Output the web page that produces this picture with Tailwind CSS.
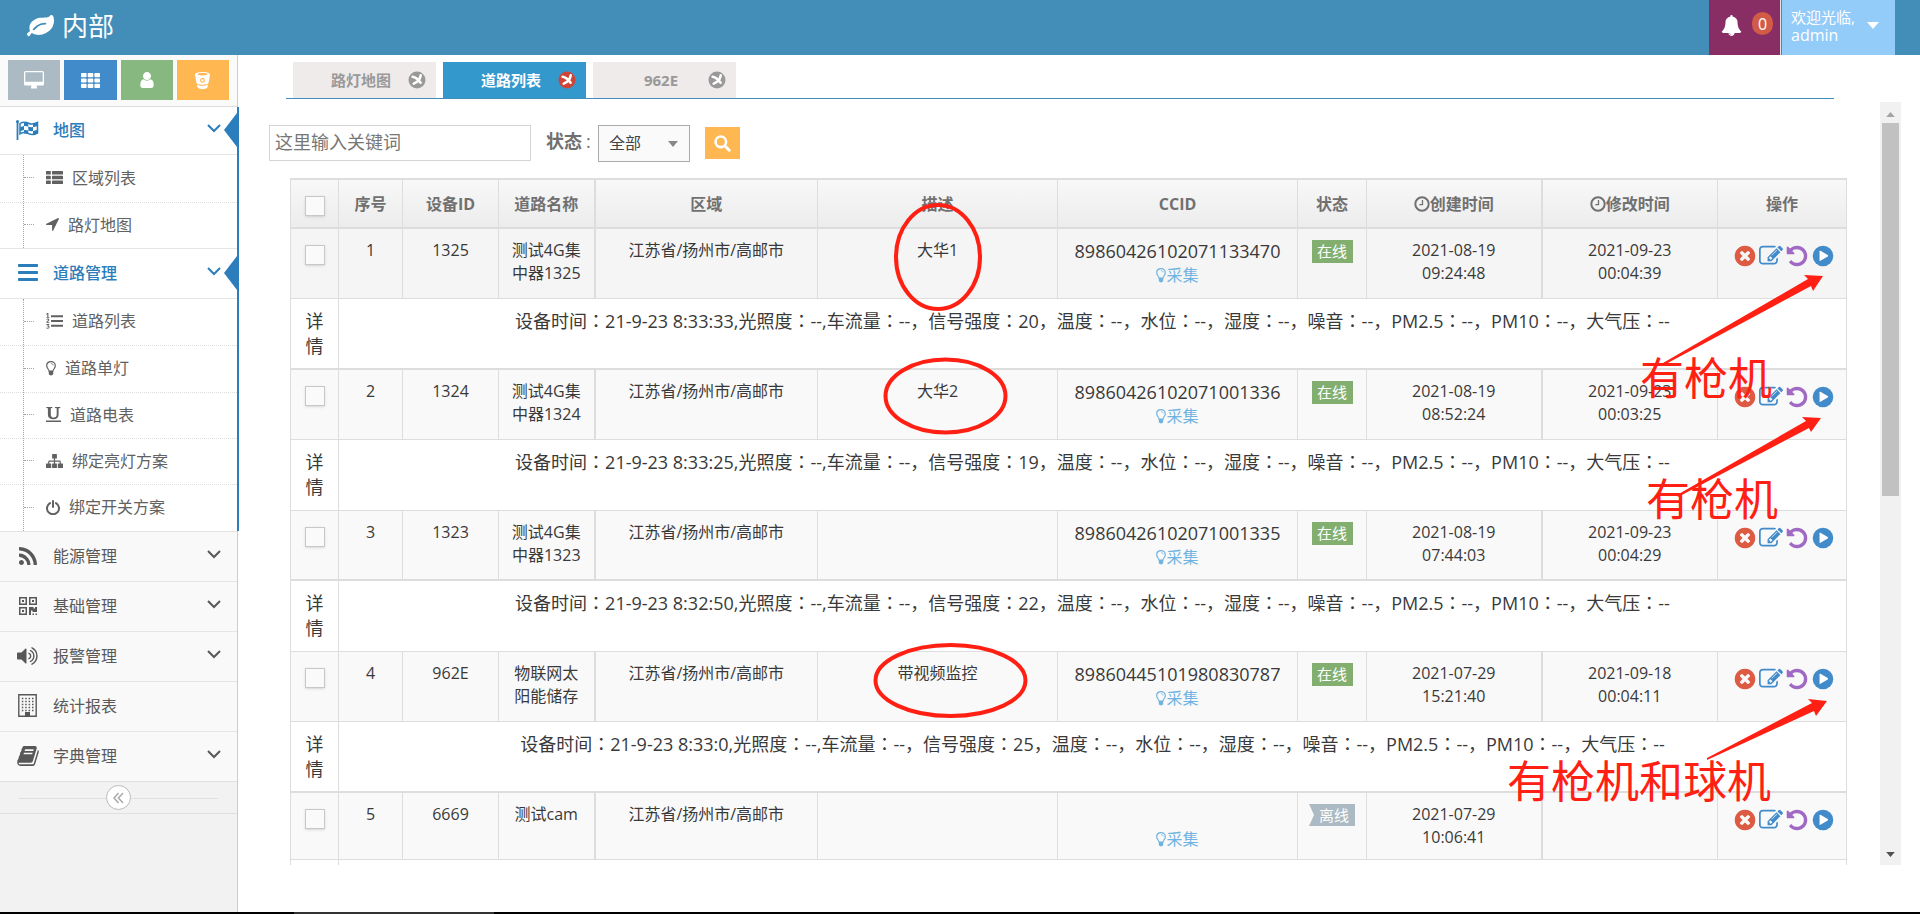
<!DOCTYPE html>
<html lang="zh-CN">
<head>
<meta charset="utf-8">
<title>内部 - 道路列表</title>
<script src="https://cdn.jsdelivr.net/npm/@tailwindcss/browser@4"></script>
</head>
<body class="relative flex h-screen flex-col overflow-hidden bg-white font-['Open_Sans','Noto_Sans_CJK_SC',sans-serif] text-base text-[#393939]">

<svg class="hidden" aria-hidden="true">
  <symbol id="leaf" viewBox="0 0 1792 1792"><path d="M1280 704q0-26-19-45t-45-19q-172 0-318 49.5t-259.5 134-235.5 219.5q-19 21-19 45 0 26 19 45t45 19q24 0 45-19 27-24 74-71t67-66q137-124 268.5-176t313.5-52q26 0 45-19t19-45zm512-198q0 95-20 193-46 224-184.5 383t-357.5 268q-214 108-438 108-148 0-286-47-15-5-88-42t-96-37q-16 0-39.5 32t-45 70-52.5 70-60 32q-43 0-63.5-17.5t-45.5-59.5q-2-4-6-11t-5.5-10-3-9.5-1.5-13.5q0-35 31-73.5t68-65.5 68-56 31-48q0-4-14-38t-16-44q-9-51-9-104 0-115 43.5-220t119-184.5 170.5-139 204-95.5q55-18 145-25.5t179.5-9 178.5-6 163.5-24 113.5-56.5l29.5-29.5 29.5-28 27-20 36.5-16 43.5-4.5q39 0 70.5 46t47.5 112 24 124 8 96z"/></symbol>
  <symbol id="bell" viewBox="0 0 1792 1792"><path d="M912 1696q0-16-16-16-59 0-101.5-42.5t-42.5-101.5q0-16-16-16t-16 16q0 73 51.5 124.5t124.5 51.5q16 0 16-16zm816-288q0 52-38 90t-90 38h-448q0 106-75 181t-181 75-181-75-75-181h-448q-52 0-90-38t-38-90q50-42 91-88t85-119.5 74.5-158.5 50-206 19.5-260q0-152 117-282.5t307-158.5q-8-19-8-39 0-40 28-68t68-28 68 28 28 68q0 20-8 39 190 28 307 158.5t117 282.5q0 139 19.5 260t50 206 74.5 158.5 85 119.5 91 88z"/></symbol>
  <symbol id="desktop" viewBox="0 0 20 18"><path fill-rule="evenodd" d="M1.5 0h17A1.500 1.500 0 0 1 20 1.500v11.500a1.500 1.500 0 0 1-1.500 1.500H12.500l.5 2a.7.7 0 0 1-.7 1H7.700a.7.7 0 0 1-.7-1l.5-2H1.500A1.500 1.500 0 0 1 0 13V1.500A1.500 1.500 0 0 1 1.500 0zM1.300 1.700v9h17.400v-9a.4.4 0 0 0-.4-.4H1.700a.4.4 0 0 0-.4.4z"/></symbol>
  <symbol id="th" viewBox="0 0 19 15"><path d="M0 .8Q0 0 .8 0h4Q5.600 0 5.600.8v2.600q0 .8-.8.8h-4Q0 4.200 0 3.400zM6.700.8q0-.8.8-.8h4q.8 0 .8.8v2.600q0 .8-.8.8h-4q-.8 0-.8-.8zM13.400.8q0-.8.8-.8h4q.8 0 .8.8v2.600q0 .8-.8.8h-4q-.8 0-.8-.8zM0 6.200q0-.8.8-.8h4q.8 0 .8.8v2.600q0 .8-.8.8h-4Q0 9.600 0 8.800zM6.700 6.200q0-.8.8-.8h4q.8 0 .8.8v2.600q0 .8-.8.8h-4q-.8 0-.8-.8zM13.400 6.200q0-.8.8-.8h4q.8 0 .8.8v2.600q0 .8-.8.8h-4q-.8 0-.8-.8zM0 11.600q0-.8.8-.8h4q.8 0 .8.8v2.600q0 .8-.8.8h-4q-.8 0-.8-.8zM6.700 11.600q0-.8.8-.8h4q.8 0 .8.8v2.600q0 .8-.8.8h-4q-.8 0-.8-.8zM13.400 11.600q0-.8.8-.8h4q.8 0 .8.8v2.600q0 .8-.8.8h-4q-.8 0-.8-.8z"/></symbol>
  <symbol id="user" viewBox="128 128 1536 1536"><path d="M1536 1399q0 109-62.500 187t-150.500 78h-854q-88 0-150.500-78t-62.500-187q0-85 8.500-160.500t31.500-152 58.500-131 94-89 134.500-34.500q131 128 313 128t313-128q76 0 134.500 34.500t94 89 58.500 131 31.500 152 8.500 160.500zm-256-887q0 159-112.500 271.500t-271.500 112.500-271.500-112.500-112.500-271.500 112.500-271.500 271.500-112.500 271.500 112.500 112.500 271.500z"/></symbol>
  <symbol id="bucket" viewBox="0 0 15 17"><path fill-rule="evenodd" d="M7.500 0C11.500 0 15 .9 15 2.600l-1.400 8.100c-.2 1-2.800 2-6.100 2s-5.900-1-6.100-2L0 2.600C0 .9 3.500 0 7.500 0zm0 1.100c-3 0-5 .5-5 1.200s2 1.200 5 1.200 5-.5 5-1.200-2-1.200-5-1.200zm0 4.900a2.400 2.400 0 1 0 0 4.800 2.400 2.400 0 0 0 0-4.800zm0 1.200a1.200 1.200 0 1 1 0 2.400 1.200 1.200 0 0 1 0-2.400zM2 12.500c1.500.9 3.300 1.300 5.500 1.300s4-.4 5.500-1.300l-.5 2.700c-.3 1-2.300 1.800-5 1.800s-4.700-.8-5-1.800z"/></symbol>
  <symbol id="flag" viewBox="0 0 23 20"><g fill="none" stroke="currentColor" stroke-width="1.500"><path d="M1.500 1v19" stroke-width="1.800"/><path d="M4 3.500c3-2 6-1.500 8.500-.3s5.500 1 9-.7v10.500c-3.500 1.800-6.500 1.800-9 .6s-5.500-1.500-8.500.3z"/></g><circle cx="1.500" cy="1.500" r="1.500"/><path d="M8 2q2.300-.4 4.300.8v3.700Q10.300 5.600 8 6zM4 7.500Q6 6 8 6v4q-2 .2-4 1.500zM12.300 6.500q2.200 1 4.700.6v4q-2.500.4-4.700-.6zM17 3.500q2-.3 4.500-1.500v4Q19 7 17 7.100zM8 10q2.300-.4 4.300.5v3.600Q10 13.200 8 13.500zM17 11q2-.5 4.500-1.500v4q-2.500 1-4.500 1.200z"/></symbol>
  <symbol id="bars" viewBox="0 0 20 17"><path d="M0 .8Q0 0 .8 0h18.400q.8 0 .8.800v1.400q0 .8-.8.8H.8Q0 3 0 2.200zM0 7.800Q0 7 .8 7h18.400q.8 0 .8.800v1.400q0 .8-.8.8H.8Q0 10 0 9.200zM0 14.800q0-.8.8-.8h18.400q.8 0 .8.800v1.400q0 .8-.8.8H.8q-.8 0-.8-.8z"/></symbol>
  <symbol id="thlist" viewBox="0 0 17 13"><path d="M0 .5Q0 0 .5 0h3.800q.5 0 .5.500v2.500q0 .5-.5.5H.5Q0 3.500 0 3zM6 .5q0-.5.500-.5h10q.5 0 .5.500v2.500q0 .5-.5.5h-10Q6 3.500 6 3zM0 5.200q0-.5.500-.5h3.800q.5 0 .5.500v2.500q0 .5-.5.500H.5Q0 8.200 0 7.700zM6 5.200q0-.5.500-.5h10q.5 0 .5.500v2.500q0 .5-.5.500h-10Q6 8.200 6 7.700zM0 10q0-.5.500-.5h3.800q.5 0 .5.500v2.500q0 .5-.5.500H.5Q0 13 0 12.500zM6 10q0-.5.500-.5h10q.5 0 .5.500v2.500q0 .5-.5.500h-10Q6 13 6 12.500z"/></symbol>
  <symbol id="location" viewBox="0 0 13 13"><path d="M12.900.9 7.200 12.600c-.2.500-1.100.4-1.100-.2V6.900H.6c-.6 0-.8-.8-.2-1.100L12.100.1c.5-.2 1 .3.800.8z"/></symbol>
  <symbol id="listol" viewBox="0 0 17 16"><path d="M5 2.200h12v2H5zM5 7h12v2H5zM5 11.800h12v2H5zM1.200 0h1.200v4h1v.8H.4V4h.9V1.300l-.8.5-.3-.8zM.3 6.200C1 5.300 3.300 5.400 3.300 6.800c0 .9-1 1.500-1.600 2.100h1.700v.9H.3c-.2-1.700 1.900-2.100 1.900-2.900 0-.7-.9-.6-1.300-.1zM.4 11h2.900v.7l-1 1.100c2 .3 1.500 2.900-.5 2.900-.8 0-1.300-.2-1.600-.5l.4-.8c.7.600 2 .6 2-.2 0-.6-.7-.7-1.300-.6l-.2-.5 1-1.200H.4z"/></symbol>
  <symbol id="bulb" viewBox="0 0 10 15"><path fill="none" stroke="currentColor" stroke-width="1.200" d="M3.100 10.200C3 8.400.7 7.300.7 4.700.7 2.300 2.600.7 5 .7s4.300 1.600 4.300 4c0 2.600-2.300 3.700-2.400 5.500z"/><path d="M2.800 10h4.400v2.900q0 .8-.9.900Q5.900 14.600 5 14.600t-1.300-.8q-.9-.1-.9-.9z"/><path fill="none" stroke="currentColor" stroke-width=".8" d="M5 2.600c1.200 0 2.100.7 2.200 1.800"/></symbol>
  <symbol id="underline" viewBox="0 0 15 15"><path d="M.3 0h6v1L4.800 1.300v6.200c0 2 .9 3.100 2.900 3.100s3-1.200 3-3.300v-6L9 1V0h5.300v1l-1.700.3v6.100c0 3-1.700 4.800-5.200 4.800S1.900 10.500 1.900 7.700V1.300L.3 1zM0 13.600h15V15H0z"/></symbol>
  <symbol id="sitemap" viewBox="0 0 17 14"><path d="M6.100.5q0-.5.500-.5h3.800q.5 0 .5.500v3.600q0 .5-.5.500H9.100v1.900h4.400q1.300 0 1.300 1.300v1.600h1.700q.5 0 .5.500v3.600q0 .5-.5.500h-4.200q-.5 0-.5-.5V9.900q0-.5.500-.5h1.300V7.700H9.100v1.700h1.300q.5 0 .5.500v3.600q0 .5-.5.500H6.600q-.5 0-.5-.5V9.900q0-.5.500-.5h1.300V7.700H3.400v1.700h1.300q.5 0 .5.500v3.600q0 .5-.5.500H.5q-.5 0-.5-.5V9.900q0-.5.500-.5h1.700V7.800q0-1.300 1.300-1.300h4.400V4.600H6.600q-.5 0-.5-.5z"/></symbol>
  <symbol id="power" viewBox="0 0 14 15"><g fill="none" stroke="currentColor" stroke-width="2" stroke-linecap="round"><path d="M4 3.100a6 6 0 1 0 6 0"/><path d="M7 1v6"/></g></symbol>
  <symbol id="rss" viewBox="192 128 1408 1408"><path d="M576 1344q0 80-56 136t-136 56-136-56-56-136 56-136 136-56 136 56 56 136zm512 123q2 28-17 48-18 21-47 21h-135q-25 0-43-16.500t-20-41.500q-22-229-184.500-391.500t-391.500-184.500q-25-2-41.500-20t-16.500-43v-135q0-29 21-47 17-17 43-17h5q160 13 306 80.500t259 181.500q114 113 181.500 259t80.500 306zm512 2q2 27-18 47-18 20-46 20h-143q-26 0-44.500-17.500t-19.500-42.500q-12-215-101-408.500t-231.500-336-336-231.500-408.500-102q-25-1-42.500-19.500t-17.500-43.500v-143q0-28 20-46 18-18 44-18h3q262 13 501.500 120t425.500 294q187 186 294 425.500t120 501.500z"/></symbol>
  <symbol id="qrcode" viewBox="0 0 18 18"><path fill-rule="evenodd" d="M0 0h8v8H0zm1.500 1.500v5h5v-5zM3 3h2v2H3zM10 0h8v8h-8zm1.500 1.500v5h5v-5zM13 3h2v2h-2zM0 10h8v8H0zm1.500 1.500v5h5v-5zM3 13h2v2H3zM10 10h4.500v1.500H16V10h2v5h-4.500v-1.500H12V18h-2zM13.500 16.500h1.500V18h-1.500zM16.500 16.500H18V18h-1.500z"/></symbol>
  <symbol id="volume" viewBox="0 0 22 18"><path d="M9.500 2v14c0 .6-.6.8-1 .4L4.500 12.500H.7c-.4 0-.7-.3-.7-.7V6.200c0-.4.300-.7.700-.7h3.800l4-3.900c.4-.4 1-.2 1 .4z"/><g fill="none" stroke="currentColor" stroke-width="1.400" stroke-linecap="round"><path d="M12 6.300a3 3 0 0 1 0 5.400M13.500 3.500a6.200 6.200 0 0 1 0 11M15 .8a9.300 9.300 0 0 1 0 16.400"/></g></symbol>
  <symbol id="building" viewBox="0 0 19 23"><path fill="none" stroke="currentColor" stroke-width="1.400" d="M.8.800h17.400v21.400H.8z"/><path d="M7 18h5v4H7z"/><path fill="none" stroke="currentColor" stroke-width="1.400" stroke-dasharray="1.500 1.900" d="M3.800 4.500h12M3.800 7.500h12M3.800 10.500h12M3.800 13.500h12M3.800 16.500h12"/></symbol>
  <symbol id="book" viewBox="60 128 1672 1536"><path d="M1703 478q40 57 18 129l-275 906q-19 64-76.500 107.500t-122.500 43.500h-923q-77 0-148.500-53.500t-99.500-131.500q-24-67-2-127 0-4 3-27t4-37q1-8-3-21.500t-3-19.500q2-11 8-21t16.500-23.500 16.500-23.500q23-38 45-91.500t30-91.500q3-10 .5-30t-.5-28q3-11 17-28t17-23q21-36 42-92t25-90q1-9-2.500-32t.5-28q4-13 22-30.500t22-22.500q19-26 42.500-84.500t27.500-96.500q1-8-3-25.500t-2-26.500q2-8 9-18t18-23 17-21q8-12 16.500-30.500t15-35 16-36 19.500-32 26.500-23.500 36-11.500 47.500 5.500l-1 3q38-9 51-9h761q74 0 114 56t18 130l-274 906q-36 119-71.500 153.500t-128.500 34.500h-869q-27 0-38 15-11 16-1 43 24 70 144 70h923q29 0 56-15.500t35-41.500l300-987q7-22 5-57 38 15 59 43zm-1064 2q-4 13 2 22.500t20 9.500h608q13 0 25.500-9.500t16.500-22.500l21-64q4-13-2-22.500t-20-9.500h-608q-13 0-25.500 9.500t-16.500 22.500zm-83 256q-4 13 2 22.500t20 9.500h608q13 0 25.500-9.500t16.500-22.500l21-64q4-13-2-22.500t-20-9.500h-608q-13 0-25.500 9.500t-16.500 22.500z"/></symbol>
  <symbol id="angle" viewBox="0 0 14 9"><path fill="none" stroke="currentColor" stroke-width="2" d="m1 1 6 6 6-6"/></symbol>
  <symbol id="dleft" viewBox="0 0 11 12"><path fill="none" stroke="currentColor" stroke-width="1.500" d="M5.500 1 1 6l4.500 5M10 1 5.500 6l4.500 5"/></symbol>
  <symbol id="tabclose" viewBox="0 0 18 18"><circle cx="9" cy="9" r="8.500"/><path fill="none" stroke="#fff" stroke-width="2.600" stroke-linecap="round" d="M4.600 5.800c2.600.4 5.700 2.700 8 5.900M12.700 4.400c-.7 3.600-3.200 6.800-7 8.200"/></symbol>
  <symbol id="search" viewBox="0 0 17 17"><circle cx="6.800" cy="6.800" r="5.300" fill="none" stroke="currentColor" stroke-width="2.600"/><path stroke="currentColor" stroke-width="3" stroke-linecap="round" d="m11.200 11.200 4 4"/></symbol>
  <symbol id="caret" viewBox="0 0 12 7"><path d="M0 0h12L6 7z"/></symbol>
  <symbol id="clock" viewBox="0 0 16 16"><circle cx="8" cy="8" r="6.700" fill="none" stroke="currentColor" stroke-width="2"/><path fill="none" stroke="currentColor" stroke-width="1.300" d="M8.500 4v4.600H5.300"/></symbol>
  <symbol id="remove" viewBox="0 0 1792 1792"><path d="M1277 1122q0-26-19-45l-181-181 181-181q19-19 19-45 0-27-19-46l-90-90q-19-19-46-19-26 0-45 19l-181 181-181-181q-19-19-45-19-27 0-46 19l-90 90q-19 19-19 46 0 26 19 45l181 181-181 181q-19 19-19 45 0 27 19 46l90 90q19 19 46 19 26 0 45-19l181-181 181 181q19 19 45 19 27 0 46-19l90-90q19-19 19-46zm387-226q0 209-103 385.500t-279.500 279.500-385.500 103-385.500-103-279.500-279.500-103-385.500 103-385.500 279.500-279.500 385.500-103 385.500 103 279.500 279.500 103 385.500z"/></symbol>
  <symbol id="edit" viewBox="0 0 1792 1792"><path d="M888 1184l116-116-152-152-116 116v56h96v96h56zm440-720q-16-16-33 1l-350 350q-17 17-1 33t33-1l350-350q17-17 1-33zm80 594v190q0 119-84.500 203.500t-203.500 84.500h-832q-119 0-203.500-84.500t-84.500-203.500v-832q0-119 84.500-203.500t203.500-84.500h832q63 0 117 25 15 7 18 23 3 17-9 29l-49 49q-14 14-32 8-23-6-45-6h-832q-66 0-113 47t-47 113v832q0 66 47 113t113 47h832q66 0 113-47t47-113v-126q0-13 9-22l64-64q15-15 35-7t20 29zm-96-738l288 288-672 672h-288v-288zm444 132l-92 92-288-288 92-92q28-28 68-28t68 28l152 152q28 28 28 68t-28 68z"/></symbol>
  <symbol id="undo" viewBox="0 0 1792 1792"><path d="M1664 896q0 156-61 298t-164 245-245 164-298 61q-172 0-327-72.500t-264-204.500q-7-10-6.500-22.500t8.500-20.500l137-138q10-9 25-9 16 2 23 12 73 95 179 147t225 52q104 0 198.500-40.500t163.500-109.500 109.500-163.500 40.500-198.500-40.500-198.500-109.500-163.500-163.500-109.500-198.500-40.500q-98 0-188 35.500t-160 101.500l137 138q31 30 14 69-17 40-59 40h-448q-26 0-45-19t-19-45v-448q0-42 40-59 39-17 69 14l130 129q107-101 244.500-156.500t284.500-55.500q156 0 298 61t245 164 164 245 61 298z"/></symbol>
  <symbol id="play" viewBox="0 0 1792 1792"><circle cx="896" cy="896" r="768"/><path fill="#fff" d="M640 545q0-72 64-36l544 320q64 64 0 110l-544 320q-64 36-64-36z"/></symbol>
</svg>

<header class="flex h-[55px] shrink-0 items-stretch bg-[#438eb9] pr-[25px] text-white">
  <a href="#" class="flex items-center gap-2 pb-0.5 pl-[27px] text-[26px]"><svg class="size-[27px] fill-current"><use href="#leaf"/></svg>内部</a>
  <div class="ml-auto flex">
    <button class="mr-px flex w-[72px] items-center gap-[10px] border-r border-[#e1e1e1] bg-[#892e65] pl-3 pb-1"><svg class="size-[21px] fill-current"><use href="#bell"/></svg><span class="mb-1 flex h-[23px] w-[21px] items-center justify-center rounded-full bg-[#d15b47] text-base">0</span></button>
    <button class="flex w-[113px] items-center gap-3 bg-[#93cbf9] pb-1 pl-[9px] text-left text-[15px] leading-[18px]"><span>欢迎光临,<br><span class="text-base leading-[18px]">admin</span></span><svg class="h-[7px] w-3 fill-current"><use href="#caret"/></svg></button>
  </div>
</header>

<main class="flex min-h-0 flex-1">
  <aside class="flex w-[238px] shrink-0 flex-col border-r border-[#ccc] bg-[#f2f2f2] text-[#585858]">
    <div class="flex h-[52px] shrink-0 gap-1 border-b border-[#ddd] bg-[#fafafa] px-2 pt-[5px] text-white">
      <button aria-label="监控" class="flex h-10 flex-1 items-center justify-center bg-[#abbac3]"><svg class="h-[18px] w-5 fill-current"><use href="#desktop"/></svg></button>
      <button aria-label="列表" class="flex h-10 flex-1 items-center justify-center bg-[#428bca]"><svg class="h-[15px] w-[19px] fill-current"><use href="#th"/></svg></button>
      <button aria-label="用户" class="flex h-10 flex-1 items-center justify-center bg-[#87b87f]"><svg class="size-4 fill-current"><use href="#user"/></svg></button>
      <button aria-label="清理" class="flex h-10 flex-1 items-center justify-center bg-[#ffb752]"><svg class="h-[17px] w-[15px] fill-current"><use href="#bucket"/></svg></button>
    </div>
    <nav id="menu" class="flex flex-col"></nav>
    <div class="relative flex h-[33px] shrink-0 items-center justify-center border-y border-[#e0e0e0]">
      <span class="absolute inset-x-[19px] top-4 h-px bg-[#e0e0e0]"></span>
      <button aria-label="收起" class="relative flex size-[25px] items-center justify-center rounded-full border border-[#bbb] bg-white text-[#aaa]"><svg class="h-3 w-[11px]"><use href="#dleft"/></svg></button>
    </div>
  </aside>

  <section class="flex min-w-0 flex-1 flex-col">
    <div role="tablist" class="mt-[7px] mr-[86px] ml-12 flex h-[37px] shrink-0 gap-[7px] border-b border-[#438eb9] pl-[7px] text-[15px] font-bold text-[#999]">
      <button role="tab" class="flex w-[143px] items-center bg-[#efebeb] pr-[10px] pl-[21px]"><span class="flex-1 text-center">路灯地图</span><svg class="size-[18px] fill-[#999]"><use href="#tabclose"/></svg></button>
      <button role="tab" aria-selected="true" class="flex w-[143px] items-center bg-[#3399cc] pr-[10px] pl-[21px] text-white"><span class="flex-1 text-center">道路列表</span><svg class="size-[18px] fill-[#d04437]"><use href="#tabclose"/></svg></button>
      <button role="tab" class="flex w-[143px] items-center bg-[#efebeb] pr-[10px] pl-[21px]"><span class="flex-1 text-center">962E</span><svg class="size-[18px] fill-[#999]"><use href="#tabclose"/></svg></button>
    </div>

    <div class="mt-[3px] mr-[19px] mb-[47px] flex min-h-0 flex-1">
      <div class="min-w-0 flex-1 overflow-hidden">
        <form class="mt-[22px] mb-4 ml-[31px] flex h-[38px] items-center">
          <input aria-label="关键词" placeholder="这里输入关键词" class="h-9 w-[262px] border border-[#d5d5d5] px-[5px] pb-0.5 text-lg placeholder:text-[#777]">
          <label for="state" class="ml-[15px] flex pb-1 text-lg font-bold text-[#707070]">状态<span class="ml-1 w-[11px] font-normal">:</span></label>
          <div class="relative ml-[1px]">
            <select id="state" class="h-[37px] w-[92px] appearance-none border border-[#aaa] bg-[#fafafa] pl-[10px] text-base text-[#444]"><option>全部</option><option>在线</option><option>离线</option></select>
            <svg class="pointer-events-none absolute top-4 right-3 h-1.5 w-[10px] fill-[#888]" preserveAspectRatio="none"><use href="#caret"/></svg>
          </div>
          <button type="button" aria-label="搜索" class="ml-[15px] flex h-8 w-[35px] items-center justify-center bg-[#ffb752] text-white"><svg class="size-[17px]"><use href="#search"/></svg></button>
        </form>
        <div class="mr-[34px] ml-[52px]">
          <table class="w-full table-fixed border-collapse text-center">
            <colgroup><col class="w-[48px]"><col class="w-[64px]"><col class="w-[96px]"><col class="w-[96px]"><col class="w-[223px]"><col class="w-[240px]"><col class="w-[240px]"><col class="w-[69px]"><col class="w-[175px]"><col class="w-[176px]"><col class="w-[129px]"></colgroup>
            <thead class="bg-linear-to-b from-[#f8f8f8] to-[#ececec] text-[#707070]">
              <tr class="h-[49px] border-y-2 border-[#ddd]">
                <th class="border-x border-[#ddd] pt-1"><input type="checkbox" aria-label="全选" class="mx-auto block size-5 appearance-none border border-[#c8c8c8] bg-[#fafafa] shadow-sm"></th>
                <th class="border-x border-[#ddd]">序号</th>
                <th class="border-x border-[#ddd]">设备ID</th>
                <th class="border-x border-[#ddd]">道路名称</th>
                <th class="border-r border-l-2 border-[#ddd]">区域</th>
                <th class="border-x border-[#ddd]">描述</th>
                <th class="border-x border-[#ddd]">CCID</th>
                <th class="border-x border-[#ddd]">状态</th>
                <th class="border-x border-[#ddd]"><span class="flex items-center justify-center"><svg class="size-4"><use href="#clock"/></svg>创建时间</span></th>
                <th class="border-r border-l-2 border-[#ddd]"><span class="flex items-center justify-center"><svg class="size-4"><use href="#clock"/></svg>修改时间</span></th>
                <th class="border-x border-[#ddd]">操作</th>
              </tr>
            </thead>
            <tbody id="rows"></tbody>
          </table>
        </div>
      </div>
      <div class="flex w-[21px] flex-col items-center bg-[#f1f1f1]">
        <span class="flex h-[21px] items-center justify-center"><svg class="mt-1 h-[5px] w-[9px] rotate-180 fill-[#a3a3a3]"><use href="#caret"/></svg></span>
        <span class="h-[373px] w-[17px] bg-[#c1c1c1]"></span>
        <span class="mt-auto flex h-[21px] items-center justify-center"><svg class="h-[5px] w-[9px] fill-[#505050]"><use href="#caret"/></svg></span>
      </div>
    </div>
  </section>
</main>
<footer class="h-0.5 shrink-0 bg-black pl-[294px]"><span class="block h-0.5 w-[200px] bg-[#333]"></span></footer>

<!-- Hand-drawn markup laid over the page -->
<svg class="pointer-events-none absolute top-0 left-0 h-[914px] w-[1920px] fill-[#ff2013] font-['Noto_Sans_CJK_SC',sans-serif] text-[44px]">
  <g fill="none" stroke="#ff2013" stroke-width="4"><ellipse cx="938" cy="257" rx="42" ry="52"/><ellipse cx="945.500" cy="396" rx="60" ry="36.500"/><ellipse cx="950.500" cy="680.500" rx="75" ry="35.500"/></g>
  <path d="m1823 276-19-1 4 4-145 84 1 2 147-79 2 5zM1821 418l-19-1 4 4-129 74 1 2 131-69 2 4zM1827 701l-19-2 4 4-105 55v2l107-49 2 5z"/>
  <text x="1640" y="395">有枪机</text><text x="1646" y="516">有枪机</text><text x="1507" y="798">有枪机和球机</text>
</svg>

<script>
const menu = [
  {icon: 'flag', size: 'h-5 w-[23px]', text: '地图', open: true, height: 'h-12', subs: [['thlist', 'h-[13px] w-[17px]', '区域列表', 'h-12'], ['location', 'size-[13px]', '路灯地图', 'h-[45px]']]},
  {icon: 'bars', size: 'h-[17px] w-5', text: '道路管理', open: true, height: 'h-[51px]', subs: [['listol', 'h-4 w-[17px]', '道路列表', 'h-[47px]'], ['bulb', 'h-[15px] w-[10px]', '道路单灯', 'h-[47px]'], ['underline', 'size-[15px]', '道路电表', 'h-[46px]'], ['sitemap', 'h-[14px] w-[17px]', '绑定亮灯方案', 'h-[46px]'], ['power', 'h-[15px] w-[14px]', '绑定开关方案', 'h-[46px]']]},
  {icon: 'rss', size: 'size-[18px]', text: '能源管理', arrow: true},
  {icon: 'qrcode', size: 'size-[18px]', text: '基础管理', arrow: true},
  {icon: 'volume', size: 'h-[18px] w-[22px]', text: '报警管理', arrow: true},
  {icon: 'building', size: 'h-[23px] w-[19px]', text: '统计报表'},
  {icon: 'book', size: 'h-[20px] w-[22px]', text: '字典管理', arrow: true},
];
document.getElementById('menu').innerHTML = menu.map(m => m.open ? `
  <div class="relative bg-white">
    <span class="absolute inset-y-0 -right-[2px] w-0.5 bg-[#2b7dbc]"></span>
    <a href="#" class="relative flex items-center border-b border-[#e5e5e5] pb-0.5 font-medium text-[#2b7dbc] ${m.height} ${m.text === '地图' ? '' : 'border-t'}">
      <span class="flex w-[53px] items-center justify-center pl-0.5"><svg class="${m.size} fill-current"><use href="#${m.icon}"/></svg></span>${m.text}
      <svg class="mr-4 mb-0.5 ml-auto h-[9px] w-[14px]"><use href="#angle"/></svg>
      <svg class="absolute right-0 h-[34px] w-[13px] fill-current" viewBox="0 0 13 34"><path d="M13 0v34L0 17z"/></svg>
    </a>
    <div class="relative">
      <span class="absolute inset-y-0 left-[23px] border-l border-dotted border-[#8fa9bd]"></span>
      ${m.subs.map((s, i) => `<a href="#" class="flex items-center pb-0.5 text-[#616161] ${s[3]} ${i < m.subs.length - 1 ? 'border-b border-dotted border-[#ddd]' : ''}">
        <span class="mr-3 ml-6 w-[10px] border-t border-dotted border-[#8fa9bd]"></span><svg class="mr-[9px] fill-current ${s[1]}"><use href="#${s[0]}"/></svg>${s[2]}</a>`).join('')}
    </div>
  </div>` : `
  <a href="#" class="flex h-[50px] items-center border-t border-[#e5e5e5] bg-[#f9f9f9] pb-0.5">
    <span class="flex w-[53px] items-center justify-center pl-0.5"><svg class="${m.size} fill-current"><use href="#${m.icon}"/></svg></span>${m.text}
    ${m.arrow ? '<svg class="mr-4 mb-0.5 ml-auto h-[9px] w-[14px]"><use href="#angle"/></svg>' : ''}
  </a>`).join('');

const rows = [
  ['1325', '测试4G集中器1325', '大华1', '89860426102071133470', '2021-08-19<br>09:24:48', '2021-09-23<br>00:04:39', '8:33:33', 20],
  ['1324', '测试4G集中器1324', '大华2', '89860426102071001336', '2021-08-19<br>08:52:24', '2021-09-23<br>00:03:25', '8:33:25', 19],
  ['1323', '测试4G集中器1323', '', '89860426102071001335', '2021-08-19<br>07:44:03', '2021-09-23<br>00:04:29', '8:32:50', 22],
  ['962E', '物联网太阳能储存', '带视频监控', '89860445101980830787', '2021-07-29<br>15:21:40', '2021-09-18<br>00:04:11', '8:33:0', 25],
  ['6669', '测试cam', '', '', '2021-07-29<br>10:06:41', '', '', 0],
];
// The full-width colon sits in the middle of its box in the TC face
const colons = t => t.replace(/：/g, '<span lang="zh-TW" class="font-[\'Noto_Sans_CJK_TC\',sans-serif] leading-none">：</span>');
document.getElementById('rows').innerHTML = rows.map((r, i) => `
  <tr class="align-top leading-[23px] border-[#ddd] ${i === 4 ? 'h-[67px]' : 'h-[70px]'} ${i === 0 ? 'bg-[#f5f5f5]' : 'bg-[#f9f9f9]'} ${i === 2 || i === 3 ? 'border-t' : 'border-t-2'}">
    <td class="border-x border-[#ddd] pt-4"><input type="checkbox" aria-label="选择 ${r[0]}" class="mx-auto block size-5 appearance-none border border-[#c8c8c8] bg-[#fafafa] shadow-sm"></td>
    <td class="border-x border-[#ddd] pt-[10px]">${i + 1}</td>
    <td class="border-x border-[#ddd] pt-[10px]">${r[0]}</td>
    <td class="border-x border-[#ddd] px-3 pt-[10px]">${r[1]}</td>
    <td class="border-r border-l-2 border-[#ddd] pt-[10px]">江苏省/扬州市/高邮市</td>
    <td class="border-x border-[#ddd] pt-[10px]">${r[2]}</td>
    <td class="border-x border-[#ddd] pt-[10px]"><div class="h-[25px] text-lg leading-[25px]">${r[3]}</div><a href="#" class="flex items-center justify-center text-[#6fb3e0]"><svg class="h-[15px] w-[10px] fill-current"><use href="#bulb"/></svg>采集</a></td>
    <td class="border-x border-[#ddd] pt-[11px]">${i === 4
      ? '<span class="mx-auto block h-[22px] w-[46px] bg-[#abbac3] pl-1 text-[15px] leading-[22px] text-white [clip-path:polygon(0_0,100%_0,100%_100%,0_100%,5px_50%)]">离线</span>'
      : '<span class="mx-auto block h-[23px] w-[41px] bg-[#82af6f] text-[15px] leading-[22px] text-white">在线</span>'}</td>
    <td class="border-x border-[#ddd] pt-[10px]">${r[4]}</td>
    <td class="border-r border-l-2 border-[#ddd] pt-[10px]">${r[5]}</td>
    <td class="border-x border-[#ddd] pt-[15px]"><div class="flex justify-center gap-0.5 pl-1">
      <button aria-label="删除"><svg class="size-6 fill-[#dd5a43]"><use href="#remove"/></svg></button>
      <button aria-label="编辑"><svg class="size-6 fill-[#428bca]"><use href="#edit"/></svg></button>
      <button aria-label="重置"><svg class="size-6 fill-[#a069c3]"><use href="#undo"/></svg></button>
      <button aria-label="播放"><svg class="size-6 fill-[#428bca]"><use href="#play"/></svg></button>
    </div></td>
  </tr>
  <tr class="h-[71px] border-[#ddd] bg-white align-top text-lg leading-[25px] ${i === 2 ? 'border-t-2' : 'border-t'}">
    <td class="border-x border-[#ddd] px-3 pt-[10px]">${i < 4 ? '详情' : ''}</td>
    <td colspan="10" class="border-x border-[#ddd] pt-[10px]">${i < 4 ? colons(`设备时间：21-9-23 ${r[6]},光照度：--,车流量：--，信号强度：${r[7]}，温度：--，水位：--，湿度：--，噪音：--，PM2.5：--，PM10：--，大气压：--`) : ''}</td>
  </tr>`).join('');
</script>
</body>
</html>
